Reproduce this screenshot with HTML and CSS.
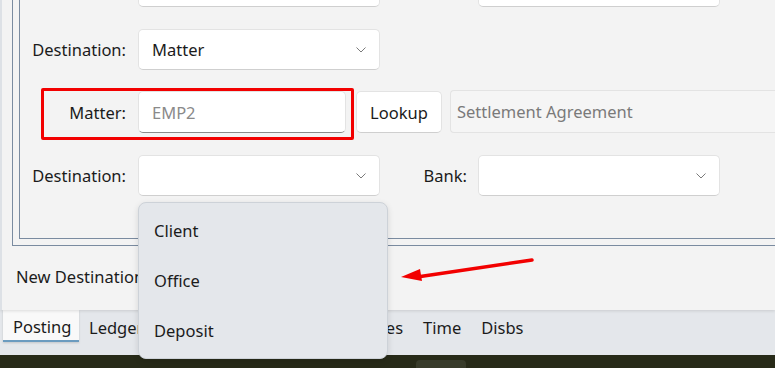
FILE: index.html
```html
<!DOCTYPE html>
<html>
<head>
<meta charset="utf-8">
<link rel="stylesheet" href="styles.css">
</head>
<body>
<div class="screen">
  <div class="panel">
    <div class="outer-box">
      <div class="inner-box">
        <div class="row row-top">
          <div class="label"></div>
          <div class="combo"></div>
          <div class="label2"></div>
          <div class="combo"></div>
        </div>
        <div class="row row-1">
          <div class="label">Destination:</div>
          <div class="combo"><span>Matter</span><svg class="chev" width="10" height="6" viewBox="0 0 10 6"><path d="M0.5 0.5 L5 5 L9.5 0.5" fill="none" stroke="#7a7a7a" stroke-width="1"/></svg></div>
        </div>
        <div class="row row-2">
          <div class="label">Matter:</div>
          <div class="textbox">EMP2</div>
          <div class="button">Lookup</div>
          <div class="readonly">Settlement Agreement</div>
        </div>
        <div class="row row-3">
          <div class="label">Destination:</div>
          <div class="combo"><span></span><svg class="chev" width="10" height="6" viewBox="0 0 10 6"><path d="M0.5 0.5 L5 5 L9.5 0.5" fill="none" stroke="#7a7a7a" stroke-width="1"/></svg></div>
          <div class="label2">Bank:</div>
          <div class="combo"><span></span><svg class="chev" width="10" height="6" viewBox="0 0 10 6"><path d="M0.5 0.5 L5 5 L9.5 0.5" fill="none" stroke="#7a7a7a" stroke-width="1"/></svg></div>
        </div>
      </div>
    </div>
    <div class="new-dest">New Destination</div>
  </div>
  <div class="tabs">
    <div class="tab active">Posting</div>
    <div class="tab">Ledger</div>
    <div class="tab">Receipts</div>
    <div class="tab">Documents</div>
    <div class="tab">Notes</div>
    <div class="tab">Time</div>
    <div class="tab">Disbs</div>
  </div>
  <div class="taskbar"><div class="task-item"></div></div>

  <div class="highlight"></div>
  <div class="dropdown">
    <div class="item">Client</div>
    <div class="item">Office</div>
    <div class="item">Deposit</div>
  </div>
  <svg class="arrow" width="140" height="30" viewBox="0 0 140 30">
    <line x1="131" y1="4" x2="16" y2="21" stroke="#f20000" stroke-width="3.5" stroke-linecap="round"/>
    <polygon points="0,21 19,13 21,25" fill="#f20000"/>
  </svg>
</div>
</body>
</html>
```

FILE: styles.css
```css
* { box-sizing: border-box; }
html, body { margin: 0; padding: 0; }
body {
  width: 775px;
  height: 368px;
  overflow: hidden;
  font-family: "Noto Sans", "Segoe UI", sans-serif;
  font-size: 16.5px;
  color: #1b1b1b;
  background: #272a18;
}
.screen {
  position: relative;
  width: 775px;
  height: 368px;
  display: flex;
  flex-direction: column;
}
.panel {
  height: 310px;
  background: #f3f3f3;
  border-left: 2px solid #dde1e6;
  box-shadow: 0 1px 3px rgba(0,0,0,0.12);
  position: relative;
  z-index: 1;
  display: flex;
  flex-direction: column;
}
.outer-box {
  margin-left: 10px;
  height: 246px;
  border-left: 1px solid #7a8ba0;
  border-bottom: 1px solid #7a8ba0;
  padding-left: 6px;
  display: flex;
  flex-direction: column;
}
.inner-box {
  height: 239px;
  border-left: 1px solid #7a8ba0;
  border-bottom: 1px solid #7a8ba0;
  display: flex;
  flex-direction: column;
}
.row {
  display: flex;
  align-items: center;
  height: 41px;
  flex: none;
}
.row-top { margin-top: -34px; }
.row-1 { margin-top: 22px; }
.row-2 { margin-top: 21px; height: 42px; }
.row-3 { margin-top: 22px; }
.label {
  width: 106px;
  text-align: right;
  margin-right: 12px;
  white-space: nowrap;
}
.label2 {
  width: 87px;
  text-align: right;
  margin-right: 11px;
  white-space: nowrap;
}
.combo {
  width: 242px;
  height: 41px;
  background: #fff;
  border: 1px solid #e3e3e3;
  border-bottom-color: #cfcfcf;
  border-radius: 5px;
  display: flex;
  align-items: center;
  justify-content: space-between;
  padding: 0 13px 0 13px;
}
.chev { margin-top: 1px; }
.textbox {
  width: 208px;
  height: 42px;
  background: #fff;
  border: 1px solid #e3e3e3;
  border-bottom: 1px solid #8a8a8a;
  border-radius: 5px;
  display: flex;
  align-items: center;
  padding-left: 13px;
  color: #8a8a8a;
}
.button {
  margin-left: 10px;
  width: 86px;
  height: 42px;
  background: #fff;
  border: 1px solid #e3e3e3;
  border-bottom-color: #cfcfcf;
  border-radius: 5px;
  display: flex;
  align-items: center;
  justify-content: center;
}
.readonly {
  margin-left: 8px;
  flex: 1;
  height: 43px;
  margin-top: -1px;
  background: #f5f5f5;
  border: 1px solid #e3e3e3;
  border-right: none;
  border-radius: 4px 0 0 4px;
  display: flex;
  align-items: center;
  padding-left: 6px;
  color: #7a7a7a;
}
.new-dest {
  padding-left: 14px;
  margin-top: 19px;
  white-space: nowrap;
}
.tabs {
  height: 45px;
  background: #e4e7eb;
  display: flex;
  align-items: flex-start;
  padding-left: 3px;
}
.tab {
  height: 32px;
  padding: 2px 10px 0 10px;
  display: flex;
  align-items: center;
  white-space: nowrap;
  flex: none;
}
.tab.active {
  background: #f9f9f9;
  border-bottom: 2px solid #6b9bbf;
  box-shadow: 0 1px 2px rgba(0,0,0,0.15);
  width: 76px;
}
.taskbar {
  flex: 1;
  background: #272a18;
  position: relative;
}
.task-item {
  position: absolute;
  left: 416px;
  top: 5px;
  width: 50px;
  height: 12px;
  border-radius: 4px;
  background: #383b2a;
}
.highlight {
  position: absolute;
  left: 41px;
  top: 88px;
  width: 313px;
  height: 52px;
  border: 3px solid #f20000;
  border-radius: 2px;
  z-index: 3;
}
.dropdown {
  position: absolute;
  left: 138px;
  top: 202px;
  width: 250px;
  height: 157px;
  background: #e4e7eb;
  border: 1px solid #cdd2d8;
  border-radius: 8px;
  box-shadow: 0 2px 6px rgba(0,0,0,0.12);
  padding-top: 2px;
  z-index: 4;
}
.item {
  height: 50px;
  display: flex;
  align-items: center;
  padding-left: 15px;
}
.arrow {
  position: absolute;
  left: 401px;
  top: 256px;
  z-index: 5;
}
```
